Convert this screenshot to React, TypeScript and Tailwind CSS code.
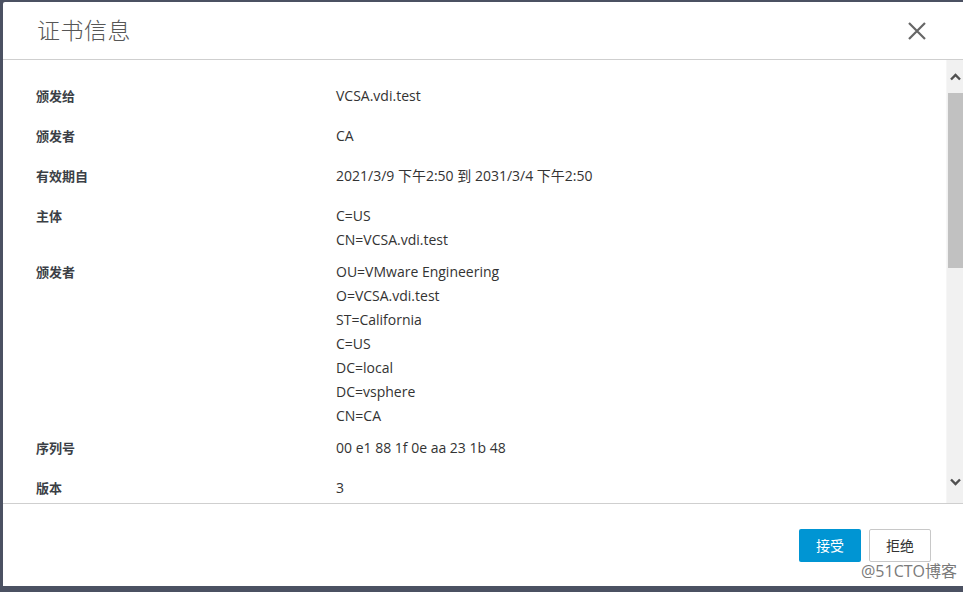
import React from "react";

type Row = { label: string; values: string[] };

const rows: Row[] = [
  { label: "颁发给", values: ["VCSA.vdi.test"] },
  { label: "颁发者", values: ["CA"] },
  { label: "有效期自", values: ["2021/3/9 下午2:50 到 2031/3/4 下午2:50"] },
  { label: "主体", values: ["C=US", "CN=VCSA.vdi.test"] },
  {
    label: "颁发者",
    values: [
      "OU=VMware Engineering",
      "O=VCSA.vdi.test",
      "ST=California",
      "C=US",
      "DC=local",
      "DC=vsphere",
      "CN=CA",
    ],
  },
  { label: "序列号", values: ["00 e1 88 1f 0e aa 23 1b 48"] },
  { label: "版本", values: ["3"] },
];

function CertRow({ row }: { row: Row }) {
  return (
    <div className="flex min-h-[40px] py-1">
      <div className="w-[300px] shrink-0 text-[13px] leading-6 font-bold text-[#3b3f46]">
        {row.label}
      </div>
      <div className="flex flex-col text-[14px] leading-6 text-[#333]">
        {row.values.map((v, i) => (
          <span key={i}>{v}</span>
        ))}
      </div>
    </div>
  );
}

function App() {
  return (
    <div
      className="h-[592px] w-[963px] overflow-hidden bg-[#4b5162] pl-[3px] pt-[2px]"
      style={{ fontFamily: '"Open Sans", "Noto Sans CJK SC", sans-serif' }}
    >
      <div className="relative flex h-[584px] flex-col rounded-tl-[2px] bg-white">
        {/* header */}
        <div className="flex h-[58px] shrink-0 items-center justify-between border-b border-[#cfcfcf] pl-[34px] pr-[37px]">
          <h2 className="text-[23px] font-light tracking-[0.5px] text-[#565656]">
            证书信息
          </h2>
          <svg width="18" height="18" viewBox="0 0 18 18">
            <path d="M1 1 L17 17 M17 1 L1 17" stroke="#666" strokeWidth="2.2" />
          </svg>
        </div>

        {/* body */}
        <div className="flex min-h-0 flex-1">
          <div className="flex-1 overflow-hidden pl-[33px] pt-5">
            {rows.map((row, i) => (
              <CertRow key={i} row={row} />
            ))}
          </div>
          <div className="flex w-[17px] shrink-0 flex-col items-center border-l border-[#f6f6f6] bg-[#f1f1f1]">
            <div className="flex h-[33px] w-full items-center justify-center">
              <svg width="11" height="8" viewBox="0 0 11 8">
                <path d="M1 6.5 L5.5 2 L10 6.5" stroke="#505050" strokeWidth="2.4" fill="none" />
              </svg>
            </div>
            <div className="h-[175px] w-[15px] bg-[#c1c1c1]" />
            <div className="flex-1" />
            <div className="flex h-[33px] w-full items-center justify-center pb-[10px]">
              <svg width="11" height="8" viewBox="0 0 11 8">
                <path d="M1 1.5 L5.5 6 L10 1.5" stroke="#505050" strokeWidth="2.4" fill="none" />
              </svg>
            </div>
          </div>
        </div>

        {/* footer */}
        <div className="flex h-[83px] shrink-0 items-start justify-end gap-2 border-t border-[#cfcfcf] pr-8 pt-[25px]">
          <button className="h-[33px] w-[62px] rounded-[2px] bg-[#0095d3] text-[14px] text-white">
            接受
          </button>
          <button className="h-[33px] w-[62px] rounded-[2px] border border-[#c8c8c8] bg-white text-[14px] text-[#333]">
            拒绝
          </button>
        </div>

        <div
          className="absolute bottom-[3px] right-[6px] text-[16px] text-[#7a7a7a]"
          style={{ textShadow: "0 0 2px #fff, 0 0 2px #fff" }}
        >
          @51CTO博客
        </div>
      </div>
    </div>
  );
}

export default App;
